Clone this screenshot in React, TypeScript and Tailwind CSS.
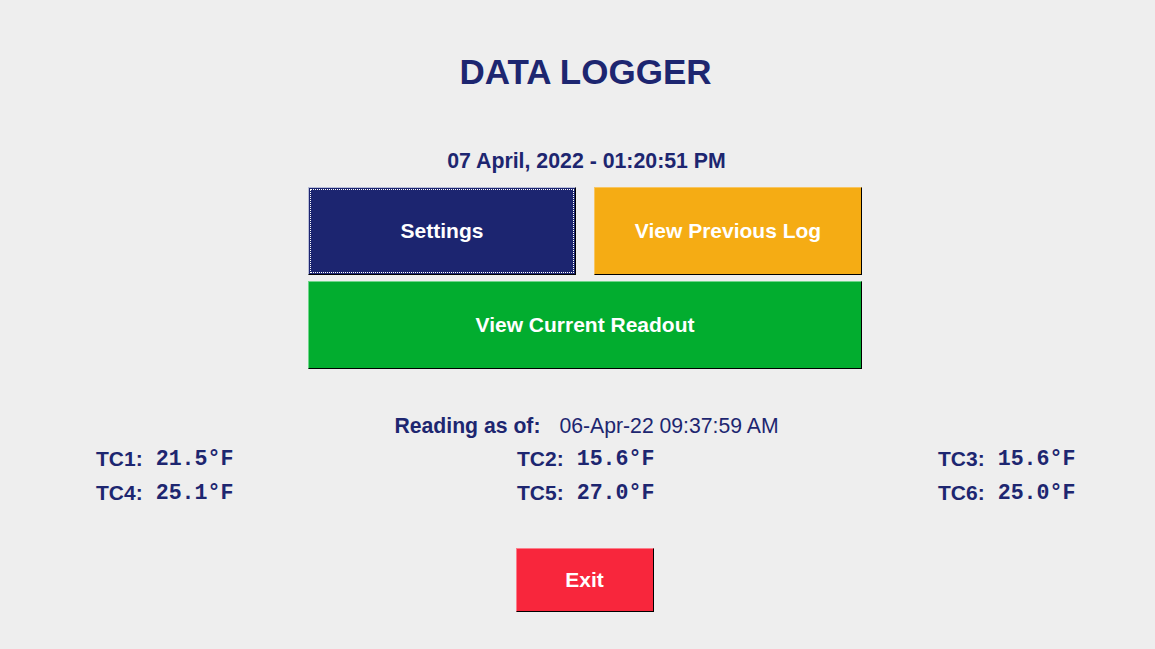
import React from "react";

const NAVY = "text-[#1d2670]";

type Reading = { label: string; value: string };

const readings: Reading[] = [
  { label: "TC1:", value: "21.5°F" },
  { label: "TC2:", value: "15.6°F" },
  { label: "TC3:", value: "15.6°F" },
  { label: "TC4:", value: "25.1°F" },
  { label: "TC5:", value: "27.0°F" },
  { label: "TC6:", value: "25.0°F" },
];

const TcCell = ({ label, value }: Reading) => (
  <div className="flex items-center h-[34px]">
    <span className={`font-bold text-[21px] leading-[34px] ${NAVY}`}>{label}</span>
    <span
      className={`ml-[13px] font-bold text-[21.6px] leading-[34px] font-['Liberation_Mono',monospace] ${NAVY}`}
    >
      {value}
    </span>
  </div>
);

export default function App() {
  return (
    <div className="w-full h-[649px] bg-[#eeeeee] flex flex-col items-center font-['Liberation_Sans',Arial,sans-serif] overflow-hidden">
      <h1 className={`mt-[52px] ml-[16px] text-[35px] leading-[40px] font-bold ${NAVY}`}>DATA LOGGER</h1>

      <div className={`mt-[57px] ml-[18px] text-[21.3px] leading-[24px] font-bold ${NAVY}`}>
        07 April, 2022 - 01:20:51 PM
      </div>

      <div className="mt-[14px] flex flex-col gap-[6px] ml-[15px]">
        <div className="flex gap-[18px]">
          <button className="w-[268px] h-[88px] bg-[#1c2570] border-t border-l border-t-[#b9bdd6] border-l-[#b9bdd6] border-b border-r border-b-black border-r-black outline-1 outline-dotted outline-white outline-offset-[-3px] text-white font-bold text-[21px]">
            Settings
          </button>
          <button className="w-[268px] h-[88px] bg-[#f5ac14] border-t border-l border-t-[#f8c560] border-l-[#f8c560] border-b border-r border-b-black border-r-black text-white font-bold text-[21px]">
            View Previous Log
          </button>
        </div>
        <button className="w-[554px] h-[88px] bg-[#02ad2f] border-t border-l border-t-[#6fd68a] border-l-[#6fd68a] border-b border-r border-b-black border-r-black text-white font-bold text-[21px]">
          View Current Readout
        </button>
      </div>

      <div className={`mt-[45px] flex items-center text-[21.2px] leading-[24px] ml-[18px] ${NAVY}`}>
        <span className="font-bold">Reading as of:</span>
        <span className="ml-[19px]">06-Apr-22 09:37:59 AM</span>
      </div>

      <div className="mt-[4px] self-stretch pl-[96px] grid grid-cols-[421px_421px_auto]">
        {readings.map((r) => (
          <TcCell key={r.label} {...r} />
        ))}
      </div>

      <button className="mt-[38px] ml-[14px] w-[138px] h-[64px] bg-[#f8263c] border-t border-l border-t-[#fb7d8a] border-l-[#fb7d8a] border-b border-r border-b-black border-r-black text-white font-bold text-[21px]">
        Exit
      </button>
    </div>
  );
}
